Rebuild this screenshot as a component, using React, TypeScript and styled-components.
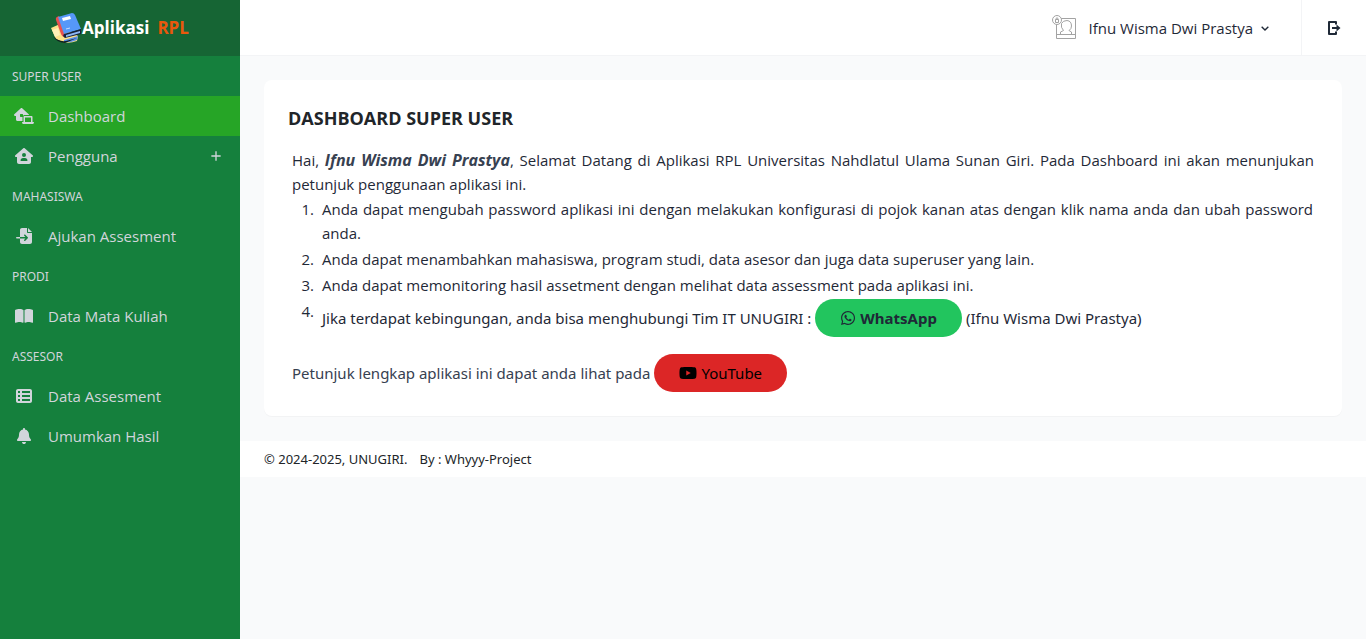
import React from "react";
import styled, { createGlobalStyle } from "styled-components";
import {
  FaBell,
  FaBookOpen,
  FaFileImport,
  FaHouseLaptop,
  FaHouseUser,
  FaTableList,
  FaWhatsapp,
  FaYoutube,
} from "react-icons/fa6";
import { BiChevronDown, BiPlus } from "react-icons/bi";

const GlobalStyle = createGlobalStyle`
  *, *::before, *::after { box-sizing: border-box; }
  body {
    margin: 0;
    background: #f9fafb;
    color: #1f2937;
    font-family: "Segoe UI", "Open Sans", "Noto Sans", sans-serif;
    font-size: 15px;
    line-height: 24px;
  }
  a { color: inherit; text-decoration: none; }
  button { font: inherit; color: inherit; border: 0; background: none; padding: 0; cursor: pointer; }
  h1, p, ol, ul { margin: 0; padding: 0; }
  ol, ul { list-style: none; }
`;

const Shell = styled.div`
  display: flex;
  min-height: 100vh;
`;

const Sidebar = styled.aside`
  flex: 0 0 240px;
  background: #15803d;
  color: #d1d5db;
`;

const Brand = styled.a`
  display: flex;
  align-items: center;
  justify-content: center;
  height: 56px;
  padding-right: 1px;
  background: #166534;
  color: #ffffff;
  font-size: 17px;
  font-weight: 700;
  line-height: 26px;
`;

const BrandAccent = styled.span`
  margin-left: 8px;
  color: #ea580c;
`;

const SectionLabel = styled.p`
  padding: 1px 12px 0;
  font-family: "Noto Sans", sans-serif;
  font-size: 12px;
  line-height: 39px;
  text-transform: uppercase;
`;

const NavLink = styled.a<{ $active?: boolean }>`
  display: flex;
  align-items: center;
  height: 40px;
  padding-right: 16px;
  background: ${(p) => (p.$active ? "#26a526" : "transparent")};
`;

const NavIcon = styled.span`
  display: flex;
  justify-content: center;
  width: 48px;
`;

const NavText = styled.span`
  flex: 1;
`;

const Main = styled.div`
  flex: 1;
  min-width: 0;
`;

const Topbar = styled.header`
  display: flex;
  justify-content: flex-end;
  height: 56px;
  background: #ffffff;
  border-bottom: 1px solid #f3f4f6;
`;

const UserMenu = styled.button`
  display: flex;
  align-items: center;
  padding: 0 28px 0 12px;
`;

const UserName = styled.span`
  margin: 0 4px 0 12px;
`;

const LogoutButton = styled.button`
  display: flex;
  align-items: center;
  justify-content: center;
  width: 65px;
  border-left: 1px solid #f3f4f6;
`;

const Content = styled.main`
  padding: 24px 24px 25px;
`;

const Card = styled.section`
  padding: 24px;
  border-radius: 8px;
  background: #ffffff;
  box-shadow: 0 1px 1px rgba(0, 0, 0, 0.03);
`;

const Title = styled.h1`
  margin-bottom: 16px;
  color: #212529;
  font-size: 18px;
  line-height: 28px;
  font-weight: 700;
  text-transform: uppercase;
`;

const Body = styled.div`
  padding: 0 4px;
  text-align: justify;
`;

const UserHighlight = styled.em`
  color: #374151;
  font-size: 16px;
  font-weight: 700;
`;

const Steps = styled.ol`
  margin-bottom: 17px;
  counter-reset: step;
`;

const Step = styled.li`
  display: grid;
  grid-template-columns: 22px 1fr;
  column-gap: 8px;
  counter-increment: step;

  &::before {
    content: counter(step) ".";
    padding: 1px 0;
    text-align: right;
  }
`;

const StepText = styled.div`
  padding: 1px 1px 1px 0;
`;

const ContactRow = styled.div<{ $muted?: boolean }>`
  display: flex;
  align-items: center;
  gap: 4px;
  padding-top: ${(p) => (p.$muted ? 0 : 1)}px;
  color: ${(p) => (p.$muted ? "#374151" : "inherit")};
  font-family: "Noto Sans", sans-serif;
`;

const PillLink = styled.a<{ $tone: "green" | "red" }>`
  display: inline-flex;
  align-items: center;
  gap: 4px;
  height: 38px;
  padding: 0 25px;
  border-radius: 19px;
  background: ${(p) => (p.$tone === "green" ? "#22c55e" : "#dc2626")};
  color: ${(p) => (p.$tone === "green" ? "#1f2937" : "#000000")};
  font-weight: ${(p) => (p.$tone === "green" ? 700 : 400)};
`;

const Footer = styled.footer`
  display: flex;
  gap: 12px;
  padding: 6px 24px;
  background: #ffffff;
  color: #212529;
  font-family: "Noto Sans", sans-serif;
  font-size: 13px;
`;

const BooksLogo = () => (
  <svg width="32" height="32" viewBox="0 0 32 32" aria-hidden="true">
    <path d="M1 16 L10 12 L28 24 L27 29 Q19 32 13 30 L6 27 Z" fill="#fde28a" />
    <path d="M14 28 L28 24 L27 28 Q20 31 14 30 Z" fill="#5b8fe8" />
    <path d="M3 24 Q8 30 16 29 L27 26 L15 31 Q6 30 3 24 Z" fill="#12201f" />
    <path d="M2 18 L8 16 L10 23 L5 25 Z" fill="#fff1b8" />
    <path d="M6 8 Q5 5 9 4 L15 21 L14 25 Q12 25 11 22 Z" fill="#e8504f" />
    <path d="M8 5 L22 1 Q24 1 25 3 L31 17 L14 22 Z" fill="#5698f8" />
    <path d="M14 22 L31 17 L31 22 L15 26 Q12 24 14 22 Z" fill="#17203a" />
    <path d="M16 23 L30 19 L30 21 L16 25 Z" fill="#8cb8f5" />
    <path d="M12 6 L20 4 L21 7 L13 9 Z" fill="#ffffff" />
    <path d="M16 17 L20 16" stroke="#c7dcff" strokeWidth="1" />
  </svg>
);

const AvatarIcon = () => (
  <svg width="25" height="25" viewBox="0 0 25 25" fill="none" stroke="#a3a3a3" aria-hidden="true">
    <path d="M9 3.500 H23.500 V23.500 H4.500 V9.500" />
    <path d="M4.500 19.500 H23.500" />
    <path d="M8.500 19.500 V17 L11.500 15.500 Q8.500 12.500 9.500 8.500 Q11 5.500 15 5.500 Q19.500 6 19.500 11 Q19.500 14 17 15.500 L19.500 17 V19.500" />
    <circle cx="5" cy="5" r="4.500" fill="#fff" />
    <path d="M3.500 4.500 H6.500 V7.500 H3.500 Z M4 4.500 V3.500 Q5 2 6 3.500 V4.500" />
  </svg>
);

const LogoutIcon = () => (
  <svg width="14" height="14" viewBox="0 0 14 14" fill="none" aria-hidden="true">
    <path d="M9 3.500 V1 H2 V13 H9 V10.500" stroke="#1f2937" strokeWidth="2" strokeLinejoin="round" />
    <path d="M5 6 H9.500 V3.500 L13.500 7 L9.500 10.500 V8 H5 Z" fill="#1f2937" />
  </svg>
);

type NavItem = { text: string; icon: React.ReactNode; active?: boolean; expandable?: boolean };

const groups: { label: string; items: NavItem[] }[] = [
  {
    label: "Super User",
    items: [
      { text: "Dashboard", icon: <FaHouseLaptop size={20} />, active: true },
      { text: "Pengguna", icon: <FaHouseUser size={18} />, expandable: true },
    ],
  },
  { label: "Mahasiswa", items: [{ text: "Ajukan Assesment", icon: <FaFileImport size={16} /> }] },
  { label: "Prodi", items: [{ text: "Data Mata Kuliah", icon: <FaBookOpen size={18} /> }] },
  {
    label: "Assesor",
    items: [
      { text: "Data Assesment", icon: <FaTableList size={16} /> },
      { text: "Umumkan Hasil", icon: <FaBell size={16} /> },
    ],
  },
];

export default function App() {
  return (
    <>
      <GlobalStyle />
      <Shell>
        <Sidebar>
          <Brand href="#">
            <BooksLogo />
            <span>Aplikasi</span>
            <BrandAccent>RPL</BrandAccent>
          </Brand>
          <nav>
            {groups.map((group) => (
              <div key={group.label}>
                <SectionLabel>{group.label}</SectionLabel>
                <ul>
                  {group.items.map((item) => (
                    <li key={item.text}>
                      <NavLink href="#" $active={item.active} aria-current={item.active ? "page" : undefined}>
                        <NavIcon>{item.icon}</NavIcon>
                        <NavText>{item.text}</NavText>
                        {item.expandable && <BiPlus size={16} />}
                      </NavLink>
                    </li>
                  ))}
                </ul>
              </div>
            ))}
          </nav>
        </Sidebar>

        <Main>
          <Topbar>
            <UserMenu type="button">
              <AvatarIcon />
              <UserName>Ifnu Wisma Dwi Prastya</UserName>
              <BiChevronDown size={16} />
            </UserMenu>
            <LogoutButton type="button" aria-label="Keluar">
              <LogoutIcon />
            </LogoutButton>
          </Topbar>

          <Content>
            <Card>
              <Title>Dashboard Super User</Title>
              <Body>
                <p>
                  Hai, <UserHighlight>Ifnu Wisma Dwi Prastya</UserHighlight>, Selamat Datang di Aplikasi RPL
                  Universitas Nahdlatul Ulama Sunan Giri. Pada Dashboard ini akan menunjukan petunjuk penggunaan
                  aplikasi ini.
                </p>
                <Steps>
                  <Step>
                    <StepText>
                      Anda dapat mengubah password aplikasi ini dengan melakukan konfigurasi di pojok kanan atas
                      dengan klik nama anda dan ubah password anda.
                    </StepText>
                  </Step>
                  <Step>
                    <StepText>
                      Anda dapat menambahkan mahasiswa, program studi, data asesor dan juga data superuser yang lain.
                    </StepText>
                  </Step>
                  <Step>
                    <StepText>
                      Anda dapat memonitoring hasil assetment dengan melihat data assessment pada aplikasi ini.
                    </StepText>
                  </Step>
                  <Step>
                    <ContactRow>
                      <span>Jika terdapat kebingungan, anda bisa menghubungi Tim IT UNUGIRI :</span>
                      <PillLink href="#" $tone="green">
                        <FaWhatsapp size={16} />
                        WhatsApp
                      </PillLink>
                      <span>(Ifnu Wisma Dwi Prastya)</span>
                    </ContactRow>
                  </Step>
                </Steps>
                <ContactRow $muted>
                  <span>Petunjuk lengkap aplikasi ini dapat anda lihat pada</span>
                  <PillLink href="#" $tone="red">
                    <FaYoutube size={18} />
                    YouTube
                  </PillLink>
                </ContactRow>
              </Body>
            </Card>
          </Content>

          <Footer>
            <span>© 2024-2025, UNUGIRI.</span>
            <span>By : Whyyy-Project</span>
          </Footer>
        </Main>
      </Shell>
    </>
  );
}
